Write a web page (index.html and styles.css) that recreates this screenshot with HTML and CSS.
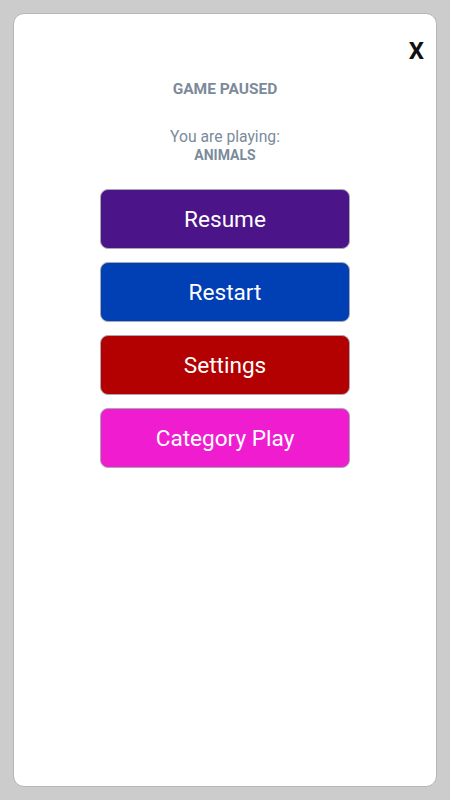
FILE: index.html
```html
<!DOCTYPE html>
<html>
<head>
<meta charset="utf-8">
<link rel="stylesheet" href="styles.css">
</head>
<body>
<div class="card">
  <div class="close-row"><span class="close">X</span></div>
  <div class="title">GAME PAUSED</div>
  <div class="playing">You are playing:</div>
  <div class="category">ANIMALS</div>
  <div class="buttons">
    <div class="btn resume">Resume</div>
    <div class="btn restart">Restart</div>
    <div class="btn settings">Settings</div>
    <div class="btn catplay">Category Play</div>
  </div>
</div>
</body>
</html>
```
FILE: styles.css
```css
html, body {
  margin: 0;
  padding: 0;
}
body {
  background: #cccccc;
  padding: 13px;
  font-family: Roboto, "Liberation Sans", sans-serif;
}
.card {
  height: 774px;
  box-sizing: border-box;
  background: #ffffff;
  border: 1px solid #b6b6ba;
  border-radius: 11px;
  padding-top: 23px;
  display: flex;
  flex-direction: column;
  align-items: center;
}
.close-row {
  align-self: stretch;
  display: flex;
  justify-content: flex-end;
  padding-right: 12px;
}
.close {
  font-size: 24px;
  line-height: 28px;
  font-weight: 700;
  color: #111111;
}
.title {
  margin-top: 15px;
  font-size: 15.5px;
  line-height: 18px;
  font-weight: 700;
  color: #7b8b9b;
}
.playing {
  margin-top: 29px;
  font-size: 15.7px;
  line-height: 19px;
  color: #7b8b9b;
}
.category {
  margin-top: 1px;
  font-size: 14px;
  line-height: 16px;
  font-weight: 700;
  color: #7b8b9b;
}
.buttons {
  margin-top: 26px;
  display: flex;
  flex-direction: column;
  gap: 13px;
}
.btn {
  width: 250px;
  height: 60px;
  box-sizing: border-box;
  border: 1px solid #a8a8b0;
  border-radius: 8px;
  padding-top: 1px;
  display: flex;
  align-items: center;
  justify-content: center;
  color: #ffffff;
  font-size: 22.6px;
}
.resume { background: #4b1488; }
.restart { background: #0040b4; }
.settings { background: #b30000; }
.catplay { background: #f01dd0; }
```
